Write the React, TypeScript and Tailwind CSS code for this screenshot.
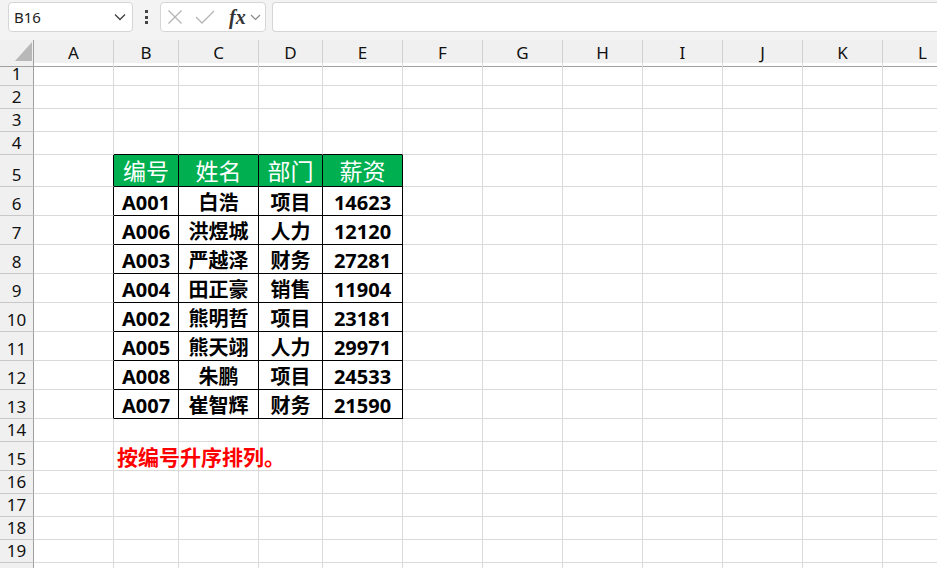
import React from "react";

const colClass = "grid grid-cols-[34px_80px_65px_80px_64px_80px_80px_80px_80px_80px_80px_80px_80px]";
const letters = ["A", "B", "C", "D", "E", "F", "G", "H", "I", "J", "K", "L"];

const header = ["编号", "姓名", "部门", "薪资"];
const data: string[][] = [
  ["A001", "白浩", "项目", "14623"],
  ["A006", "洪煜城", "人力", "12120"],
  ["A003", "严越泽", "财务", "27281"],
  ["A004", "田正豪", "销售", "11904"],
  ["A002", "熊明哲", "项目", "23181"],
  ["A005", "熊天翊", "人力", "29971"],
  ["A008", "朱鹏", "项目", "24533"],
  ["A007", "崔智辉", "财务", "21590"],
];

const rowHeights: Record<number, string> = {
  5: "h-[32px]",
  6: "h-[29px]",
  7: "h-[29px]",
  8: "h-[29px]",
  9: "h-[29px]",
  10: "h-[29px]",
  11: "h-[29px]",
  12: "h-[29px]",
  13: "h-[29px]",
  15: "h-[29px]",
};

function Toolbar() {
  return (
    <div className="flex items-start h-[40px] bg-[#f3f3f3] pt-[2px] pl-[8px] gap-0">
      <div className="flex items-center justify-between w-[125px] h-[30px] bg-white border border-[#d6d6d6] rounded-[4px] pl-[5px] pr-[6px]">
        <span className="text-[15px] text-[#222]" style={{ fontFamily: '"Noto Sans", sans-serif' }}>B16</span>
        <svg width="12" height="8" viewBox="0 0 12 8">
          <path d="M1 1.5 L6 6.5 L11 1.5" fill="none" stroke="#404040" strokeWidth="1.3" />
        </svg>
      </div>
      <div className="flex flex-col items-center justify-center gap-[2.5px] w-[27px] h-[30px]">
        <span className="block w-[3px] h-[3px] bg-[#444]"></span>
        <span className="block w-[3px] h-[3px] bg-[#444]"></span>
        <span className="block w-[3px] h-[3px] bg-[#444]"></span>
      </div>
      <div className="flex items-center w-[106px] h-[30px] bg-white border border-[#d6d6d6] rounded-[4px] pl-[6px]">
        <svg width="16" height="16" viewBox="0 0 16 16">
          <path d="M1.5 1.5 L14.5 14.5 M14.5 1.5 L1.5 14.5" stroke="#b4b4b4" strokeWidth="1.3" fill="none" />
        </svg>
        <svg width="20" height="16" viewBox="0 0 20 16" className="ml-[12px]">
          <path d="M1 8 L7 14 L19 2" stroke="#b4b4b4" strokeWidth="1.3" fill="none" />
        </svg>
        <span className="ml-[14px] text-[20px] leading-none italic font-bold text-[#333]" style={{ fontFamily: '"Liberation Serif", serif' }}>fx</span>
        <svg width="11" height="7" viewBox="0 0 11 7" className="ml-[4px]">
          <path d="M1 1 L5.5 5.5 L10 1" fill="none" stroke="#888" strokeWidth="1.2" />
        </svg>
      </div>
      <div className="ml-[6px] flex-1 h-[30px] bg-white border border-[#d6d6d6] rounded-l-[4px] border-r-0"></div>
    </div>
  );
}

function ColumnHeader() {
  return (
    <div className={`${colClass} h-[23px] bg-[#f0f0f0]`}>
      <div className="relative border-r border-b border-r-[#a0a0a0] border-b-[#a0a0a0]">
        <svg width="17" height="19" viewBox="0 0 17 19" className="absolute left-[15px] top-[2px]">
          <path d="M17 0 L17 19 L0 19 Z" fill="#b8b8b8" />
        </svg>
      </div>
      {letters.map((l) => (
        <div
          key={l}
          className="flex items-center justify-center border-r border-b border-r-[#d0d0d0] border-b-[#a0a0a0] text-[17px] text-[#111]"
          style={{ fontFamily: '"Noto Sans", sans-serif' }}
        >
          {l}
        </div>
      ))}
    </div>
  );
}

function Row({ r }: { r: number }) {
  const h = rowHeights[r] ?? "h-[23px]";
  const inTableRow = r >= 5 && r <= 13;
  const cells = [];
  for (let c = 0; c < 12; c++) {
    const inTable = inTableRow && c >= 1 && c <= 4;
    const rightBlack = inTable || (inTableRow && c === 0);
    const bottomBlack = inTable || (r === 4 && c >= 1 && c <= 4);
    const rb = rightBlack ? "border-r-black" : "border-r-[#dadada]";
    const bb = bottomBlack ? "border-b-black" : "border-b-[#dadada]";
    let content: React.ReactNode = null;
    let extra = "text-[20px]";
    if (inTable) {
      if (r === 5) {
        extra = "bg-[#00b050] text-white font-normal text-[23px] pt-[1px]";
        content = header[c - 1];
      } else {
        extra = "text-black font-bold text-[20px] pt-[3px]";
        content = data[r - 6][c - 1];
      }
    }
    if (r === 15 && c === 1) {
      cells.push(
        <div key={c} className={`relative border-r border-b ${rb} ${bb} overflow-visible`}>
          <span
            className="absolute left-[3px] top-[-1px] whitespace-nowrap text-[21px] font-bold text-[#ff0000]"
            style={{ fontFamily: '"Noto Sans CJK SC", sans-serif' }}
          >
            按编号升序排列。
          </span>
        </div>
      );
      continue;
    }
    cells.push(
      <div
        key={c}
        className={`flex items-center justify-center border-r border-b ${rb} ${bb} leading-none ${extra}`}
        style={{ fontFamily: '"Noto Sans", "Noto Sans CJK SC", sans-serif' }}
      >
        {content}
      </div>
    );
  }
  return (
    <div className={`${colClass} ${h}`}>
      <div
        className="flex items-end justify-center pb-[1px] bg-[#f0f0f0] border-r border-b border-r-[#a0a0a0] border-b-[#c8c8c8] text-[17px] leading-[20px] text-[#111]"
        style={{ fontFamily: '"Noto Sans", sans-serif' }}
      >
        {r <= 19 ? r : null}
      </div>
      {cells}
    </div>
  );
}

export default function App() {
  const rows = Array.from({ length: 20 }, (_, i) => i + 1);
  return (
    <div className="w-[937px] h-[568px] overflow-hidden bg-white">
      <Toolbar />
      <ColumnHeader />
      {rows.map((r) => (
        <Row key={r} r={r} />
      ))}
    </div>
  );
}
